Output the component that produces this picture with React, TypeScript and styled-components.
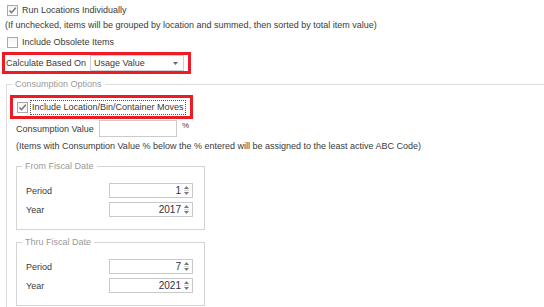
import React from "react";
import styled, { createGlobalStyle } from "styled-components";

const GlobalStyle = createGlobalStyle`
  html, body {
    margin: 0;
    padding: 0;
    background: #ffffff;
  }
  body {
    font-family: "Liberation Sans", Arial, sans-serif;
    font-size: 9px;
    color: #3a3a3a;
  }
`;

const Page = styled.div`
  width: 544px;
  height: 307px;
  overflow: hidden;
  display: flex;
  flex-direction: column;
`;

const CheckRow = styled.div<{ $top: number }>`
  display: flex;
  align-items: center;
  gap: 4px;
  height: 16px;
  margin: ${(p) => p.$top}px 0 0 7px;
`;

const Box = styled.span`
  width: 11px;
  height: 11px;
  box-sizing: border-box;
  border: 1px solid #a9a9a9;
  background: linear-gradient(#f4f4f4, #ffffff);
  display: flex;
  align-items: center;
  justify-content: center;
  flex: none;
`;

const Note = styled.div<{ $left: number; $height: number }>`
  margin: 1px 0 0 ${(p) => p.$left}px;
  height: ${(p) => p.$height}px;
  line-height: ${(p) => p.$height}px;
  white-space: nowrap;
`;

const Highlight = styled.div<{ $width: number; $height: number; $pad: number }>`
  box-sizing: content-box;
  width: ${(p) => p.$width}px;
  height: ${(p) => p.$height}px;
  border: 3px solid #ed1c24;
  display: flex;
  align-items: center;
  padding-left: ${(p) => p.$pad}px;
`;

const CalcHighlight = styled(Highlight)`
  margin: 2px 0 0 2px;
`;

const MovesHighlight = styled(Highlight)`
  margin: 0 0 0 -6px;
  gap: 2px;
`;

const Select = styled.div`
  margin-left: auto;
  margin-right: 4px;
  width: 94px;
  height: 16px;
  box-sizing: border-box;
  border: 1px solid #cfcfcf;
  background: #fff;
  display: flex;
  align-items: center;
  justify-content: space-between;
  padding: 0 5px 0 3px;
`;

const Focus = styled.span`
  border: 1px dotted #555;
  padding: 1px 1px;
  line-height: 11px;
`;

const Group = styled.fieldset`
  margin: 0;
  min-width: 0;
  border: 1px solid #d4d4d4;
  display: flex;
  flex-direction: column;
`;

const ConsumptionGroup = styled(Group)`
  margin: 4px 0 0 6px;
  padding: 5px 0 0 9px;
  border-color: #dcdcdc;
  border-right: none;
  border-bottom: none;
  flex: 1;
`;

const DateGroup = styled(Group)`
  width: 189px;
  box-sizing: border-box;
  margin: 6px 0 0 0;
  padding: 11px 11px 12px 9px;
  gap: 4px;
`;

const Legend = styled.legend`
  padding: 0 3px;
  margin-left: -4px;
  line-height: 12px;
  color: #9a9a9a;
`;

const ValueRow = styled.div`
  display: flex;
  align-items: center;
  height: 17px;
  margin-top: 1px;
`;

const Label = styled.span<{ $width: number }>`
  width: ${(p) => p.$width}px;
  flex: none;
`;

const TextInput = styled.div`
  width: 78px;
  height: 17px;
  box-sizing: border-box;
  border: 1px solid #cbcbcb;
  background: #fff;
`;

const Percent = styled.span`
  align-self: flex-start;
  font-size: 8px;
  margin: 1px 0 0 5px;
`;

const SpinRow = styled.div`
  display: flex;
  align-items: center;
  height: 15px;
`;

const Spinner = styled.div`
  width: 84px;
  height: 15px;
  box-sizing: border-box;
  border: 1px solid #c9c9c9;
  background: #fff;
  display: flex;
  align-items: center;
  justify-content: flex-end;
  gap: 2px;
  padding-right: 2px;
  font-size: 10px;
  color: #2f2f45;
`;

const Check = () => (
  <svg width="9" height="9" viewBox="0 0 9 9">
    <polyline points="1.5,4.5 3.5,6.8 7.8,1.8" fill="none" stroke="#707070" strokeWidth="1.4" />
  </svg>
);

const CheckBox: React.FC<{ checked?: boolean }> = ({ checked }) => <Box>{checked && <Check />}</Box>;

const DropArrow = () => (
  <svg width="5" height="3" viewBox="0 0 5 3">
    <polygon points="0,0 5,0 2.5,3" fill="#6a6a6a" />
  </svg>
);

const SpinArrows = () => (
  <svg width="7" height="11" viewBox="0 0 7 11">
    <polygon points="3.5,1 6,4 1,4" fill="#7a7a7a" />
    <line x1="1" y1="5.5" x2="6" y2="5.5" stroke="#d6d6d6" strokeWidth="1" />
    <polygon points="1,7 6,7 3.5,10" fill="#7a7a7a" />
  </svg>
);

const SpinField: React.FC<{ label: string; value: number }> = ({ label, value }) => (
  <SpinRow>
    <Label $width={83}>{label}</Label>
    <Spinner>
      <span>{value}</span>
      <SpinArrows />
    </Spinner>
  </SpinRow>
);

const FiscalDate: React.FC<{ title: string; period: number; year: number }> = ({ title, period, year }) => (
  <DateGroup>
    <Legend>{title}</Legend>
    <SpinField label="Period" value={period} />
    <SpinField label="Year" value={year} />
  </DateGroup>
);

export default function App() {
  return (
    <Page>
      <GlobalStyle />
      <CheckRow $top={2}>
        <CheckBox checked />
        <span>Run Locations Individually</span>
      </CheckRow>
      <Note $left={5} $height={13}>
        (If unchecked, items will be grouped by location and summed, then sorted by total item value)
      </Note>
      <CheckRow $top={2}>
        <CheckBox />
        <span>Include Obsolete Items</span>
      </CheckRow>
      <CalcHighlight $width={182} $height={16} $pad={1}>
        <span>Calculate Based On</span>
        <Select>
          <span>Usage Value</span>
          <DropArrow />
        </Select>
      </CalcHighlight>
      <ConsumptionGroup>
        <Legend>Consumption Options</Legend>
        <MovesHighlight $width={173} $height={18} $pad={4}>
          <CheckBox checked />
          <Focus>Include Location/Bin/Container Moves</Focus>
        </MovesHighlight>
        <ValueRow>
          <Label $width={83}>Consumption Value</Label>
          <TextInput />
          <Percent>%</Percent>
        </ValueRow>
        <Note $left={0} $height={16}>
          (Items with Consumption Value % below the % entered will be assigned to the least active ABC Code)
        </Note>
        <FiscalDate title="From Fiscal Date" period={1} year={2017} />
        <FiscalDate title="Thru Fiscal Date" period={7} year={2021} />
      </ConsumptionGroup>
    </Page>
  );
}
